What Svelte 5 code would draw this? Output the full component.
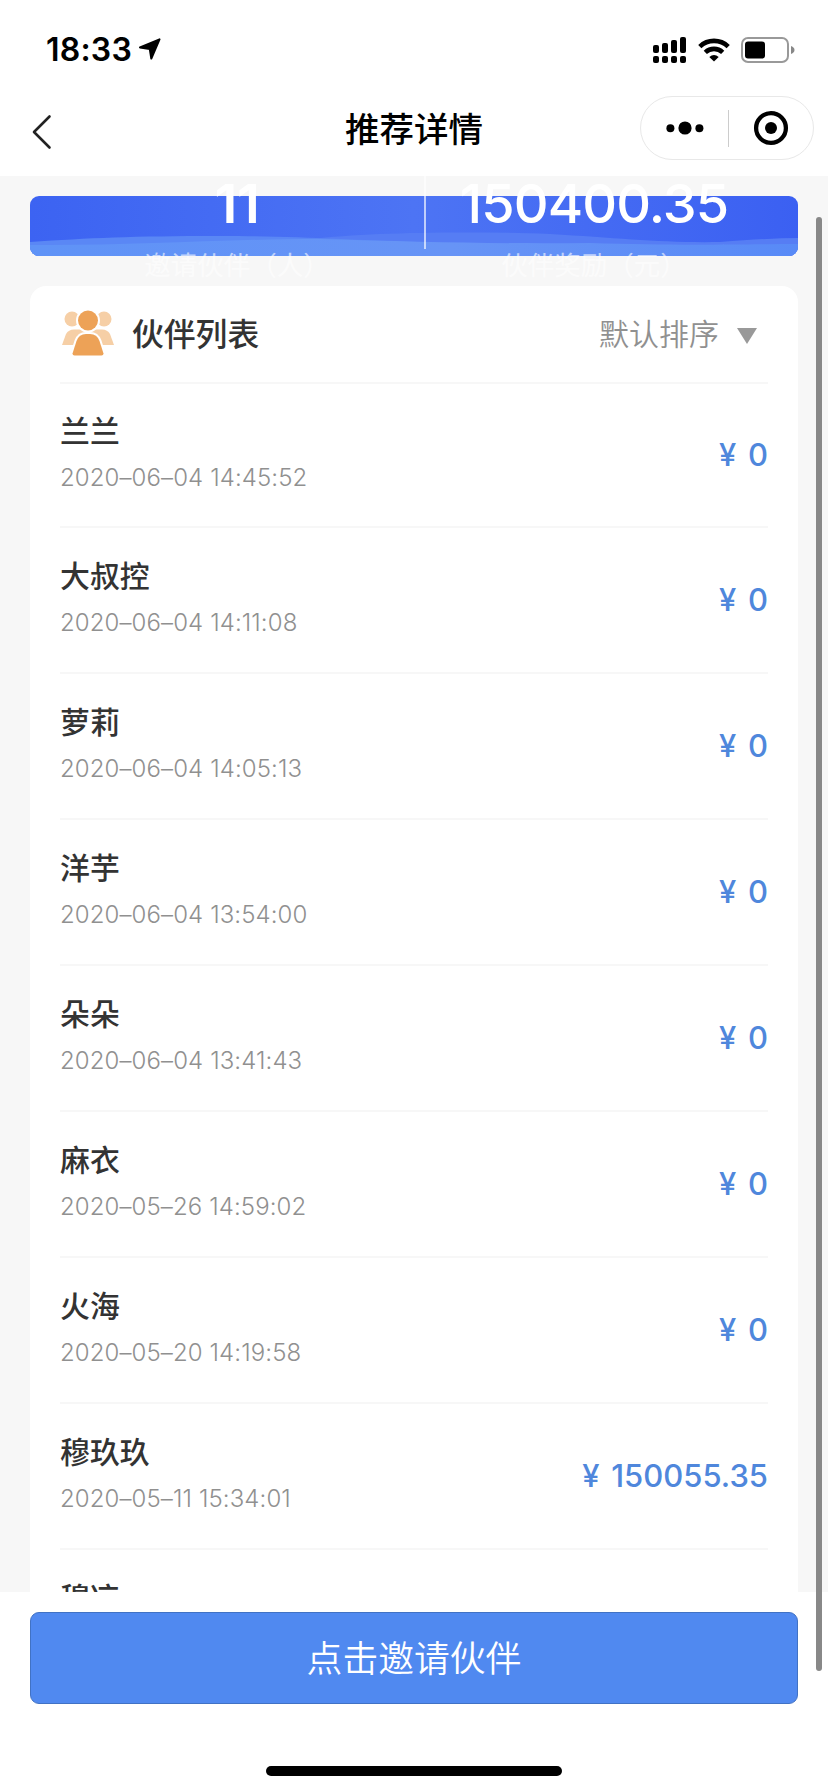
<script lang="ts">
  type Partner = { name: string; time: string; amount: string };

  const stats = { partners: "11", reward: "150400.35" };

  const partners: Partner[] = [
    { name: "兰兰", time: "2020–06–04 14:45:52", amount: "0" },
    { name: "大叔控", time: "2020–06–04 14:11:08", amount: "0" },
    { name: "萝莉", time: "2020–06–04 14:05:13", amount: "0" },
    { name: "洋芋", time: "2020–06–04 13:54:00", amount: "0" },
    { name: "朵朵", time: "2020–06–04 13:41:43", amount: "0" },
    { name: "麻衣", time: "2020–05–26 14:59:02", amount: "0" },
    { name: "火海", time: "2020–05–20 14:19:58", amount: "0" },
    { name: "穆玖玖", time: "2020–05–11 15:34:01", amount: "150055.35" },
    { name: "穆凉", time: "", amount: "" },
  ];

  // heights of the signal bars
  const bars = [8, 10, 13, 16];
</script>

<div class="screen">
  <header class="status-bar">
    <div class="clock">
      <span>18:33</span>
      <svg width="24" height="24" viewBox="0 0 24 24">
        <path d="M2 9.5 L21.5 1.3 L13.3 20.5 L11.8 11 Z" stroke="#000" stroke-width="2" stroke-linejoin="round" />
      </svg>
    </div>
    <div class="indicators">
      <svg width="34" height="28" viewBox="0 0 34 28">
        {#each bars as h, i}
          <rect x={i * 9} y={17 - h} width="6" height={h} rx="2" />
          <rect x={i * 9} y="20" width="6" height="7" rx="2" />
        {/each}
      </svg>
      <svg width="32" height="24" viewBox="0 0 32 24" fill="none" stroke="#000" stroke-width="4.6">
        <path d="M1.8 8.6 A20.5 20.5 0 0 1 30.2 8.6" />
        <path d="M7.3 14.4 A12.6 12.6 0 0 1 24.7 14.4" />
        <path d="M11.3 19 Q16 15.2 20.7 19 L16 23.6 Z" fill="#000" stroke="none" />
      </svg>
      <svg width="54" height="26" viewBox="0 0 54 26">
        <rect x="1" y="1" width="46" height="24" rx="6" fill="none" stroke="#999" stroke-width="2" />
        <rect x="4" y="4.5" width="20" height="17" rx="3" />
        <path d="M50 9 Q53.5 10.5 53.5 13 Q53.5 15.5 50 17 Z" fill="#888" />
      </svg>
    </div>
  </header>

  <nav class="nav-bar">
    <button class="back" aria-label="返回">
      <svg width="20" height="36" viewBox="0 0 20 36" fill="none" stroke="#222" stroke-width="2.6" stroke-linecap="round" stroke-linejoin="round">
        <path d="M17.5 2.5 L2 18 L17.5 33.5" />
      </svg>
    </button>
    <h1>推荐详情</h1>
    <div class="capsule">
      <svg width="38" height="14" viewBox="0 0 38 14">
        <circle cx="4.4" cy="7.3" r="4" />
        <circle cx="19" cy="7" r="6.6" />
        <circle cx="33.4" cy="7.3" r="4" />
      </svg>
      <span class="bar"></span>
      <svg width="36" height="36" viewBox="0 0 36 36">
        <circle cx="18" cy="18" r="14.9" fill="none" stroke="#000" stroke-width="4.3" />
        <circle cx="18" cy="18" r="6" />
      </svg>
    </div>
  </nav>

  <main>
    <section class="banner">
      <svg class="waves" viewBox="0 0 768 60" preserveAspectRatio="none">
        <defs>
          <linearGradient id="sky" x1="0" x2="1" y1="0" y2="0">
            <stop offset="0" stop-color="#3c63f2" />
            <stop offset="0.5" stop-color="#4d74f4" />
            <stop offset="1" stop-color="#3b60f2" />
          </linearGradient>
          <linearGradient id="wave" x1="0" x2="1" y1="0" y2="0">
            <stop offset="0" stop-color="#5f93f7" />
            <stop offset="0.55" stop-color="#6794f6" />
            <stop offset="1" stop-color="#588af7" />
          </linearGradient>
        </defs>
        <rect width="768" height="60" fill="url(#sky)" />
        <path d="M280 43 C340 36 440 35 520 38 C590 42 630 47 690 46 Q740 42 768 42 V60 H280 Z" fill="#567df4" />
        <path d="M0 46 C60 42 100 40 190 40 C270 40 320 44 390 46 V60 H0 Z" fill="#5a87f5" />
        <path d="M0 49 C100 50 190 43 290 43 C390 46 470 48 560 47 C650 50 720 48 768 48 V60 H0 Z" fill="url(#wave)" />
      </svg>
      <div class="stats">
        <div class="stat">
          <strong>{stats.partners}</strong>
          <span>邀请伙伴（人）</span>
        </div>
        <div class="stat reward">
          <strong>{stats.reward}</strong>
          <span>伙伴奖励（元）</span>
        </div>
      </div>
    </section>

    <section class="card">
      <div class="card-head">
        <svg width="52" height="48" viewBox="0 0 52 48">
          <g fill="#f6cfa6">
            <circle cx="10" cy="10" r="7.5" />
            <circle cx="42" cy="10" r="7.5" />
            <path d="M0 36 L4 25 Q6.5 20.5 12 20.5 H40 Q45.5 20.5 48 25 L52 36 Z" />
          </g>
          <g fill="#eda257" stroke="#fff" stroke-width="4" paint-order="stroke">
            <circle cx="26" cy="11.5" r="10" />
            <path d="M10.5 44.5 L14.5 32 Q17 25 24 25 H28 Q35 25 37.5 32 L41.5 44.5 Q41.5 46.5 39.5 46.5 H12.5 Q10.5 46.5 10.5 44.5 Z" />
          </g>
        </svg>
        <h2>伙伴列表</h2>
        <div class="sort">
          <span>默认排序</span>
          <i class="caret"></i>
        </div>
      </div>
      <ul>
        {#each partners as p}
          <li>
            <div class="info">
              <span class="name">{p.name}</span>
              <time>{p.time}</time>
            </div>
            {#if p.amount}
              <span class="amount">¥ {p.amount}</span>
            {/if}
          </li>
        {/each}
      </ul>
    </section>
  </main>

  <footer>
    <button class="invite">点击邀请伙伴</button>
    <div class="home"></div>
  </footer>

  <div class="scrollbar"></div>
</div>

<style>
  :global(body) {
    background: #fff;
  }

  .screen {
    position: relative;
    display: flex;
    flex-direction: column;
    width: 828px;
    height: 1792px;
    overflow: hidden;
    background: #fff;
    color: #000;
    font-family: Inter, "Noto Sans CJK SC", sans-serif;
  }

  .status-bar {
    display: flex;
    justify-content: space-between;
    align-items: center;
    height: 96px;
    padding: 3px 33px 0 46px;
    box-sizing: border-box;
  }

  .clock {
    display: flex;
    align-items: center;
    gap: 6px;
    font-size: 32px;
    font-weight: 600;
    letter-spacing: 0.2px;
  }

  .indicators {
    display: flex;
    align-items: center;
    gap: 11px;
  }

  .nav-bar {
    display: grid;
    grid-template-columns: 1fr auto 1fr;
    align-items: center;
    height: 80px;
    padding: 0 14px 16px 32px;
    box-sizing: border-box;
  }

  button {
    border: 0;
    padding: 0;
    background: none;
    font-family: inherit;
  }

  .back {
    display: flex;
    padding-top: 8px;
  }

  h1 {
    margin: 4px 0 0 -18px;
    font-size: 34.5px;
    font-weight: 500;
    line-height: 60px;
  }

  .capsule {
    justify-self: end;
    display: flex;
    align-items: center;
    justify-content: space-between;
    width: 174px;
    height: 64px;
    padding: 0 24px 0 25px;
    box-sizing: border-box;
    border: 1px solid #e8e8e8;
    border-radius: 32px;
  }

  .capsule .bar {
    width: 1px;
    height: 37px;
    margin-right: 0;
    background: #ccc;
  }

  main {
    height: 1416px;
    padding: 20px 30px 0;
    box-sizing: border-box;
    overflow: hidden;
    background: #f7f7f7;
  }

  .banner {
    position: relative;
    height: 60px;
    margin-bottom: 30px;
  }

  .waves {
    display: block;
    width: 100%;
    height: 100%;
    border-radius: 9px;
  }

  /* the figures spill over both edges of the banner */
  .stats {
    position: absolute;
    top: -27px;
    left: 20px;
    display: flex;
    color: #fff;
  }

  .stat {
    display: flex;
    flex-direction: column;
    align-items: center;
    width: 374px;
  }

  .stat.reward {
    width: 336px;
    height: 80px;
    border-left: 2px solid rgba(255, 255, 255, 0.65);
  }

  .stat strong {
    font-size: 54px;
    font-weight: 600;
    line-height: 70px;
    letter-spacing: -0.3px;
  }

  .stat.reward strong {
    font-weight: 500;
    letter-spacing: -0.9px;
  }

  .stat span {
    font-size: 26.5px;
    line-height: 40px;
    margin-top: 6px;
    white-space: nowrap;
    opacity: 0.6;
  }

  .card {
    padding: 0 30px;
    border-radius: 16px;
    background: #fff;
  }

  .card-head {
    display: flex;
    align-items: center;
    height: 98px;
    padding: 0 11px 2px 2px;
    box-sizing: border-box;
    border-bottom: 2px solid #f7f7f7;
  }

  h2 {
    flex: 1;
    margin: 0 0 3px 18px;
    font-size: 31.8px;
    font-weight: 500;
    color: #333;
  }

  .sort {
    display: flex;
    align-items: center;
    gap: 18px;
    font-size: 30px;
    font-weight: 350;
    color: #909090;
  }

  .sort span {
    margin-bottom: 3px;
  }

  .caret {
    margin-top: 6px;
    border: 10.5px solid transparent;
    border-top: 16px solid #999;
    border-bottom: 0;
  }

  ul {
    margin: 0;
    padding: 0;
    list-style: none;
  }

  li {
    display: flex;
    justify-content: space-between;
    align-items: center;
    height: 146px;
    box-sizing: border-box;
    border-bottom: 2px solid #f7f7f7;
  }

  li:first-child {
    height: 144px;
  }

  .info {
    display: flex;
    flex-direction: column;
    padding-bottom: 4px;
  }

  .name {
    font-size: 29.9px;
    font-weight: 500;
    line-height: 48px;
    color: #333;
  }

  time {
    height: 44px;
    font-size: 24px;
    font-weight: 300;
    line-height: 45px;
    letter-spacing: 0.1px;
    color: #909090;
  }

  .amount {
    margin-bottom: 2px;
    font-size: 31px;
    font-weight: 500;
    word-spacing: 3.5px;
    color: #4f87dc;
  }

  footer {
    display: flex;
    flex-direction: column;
    align-items: center;
    padding-top: 20px;
  }

  .invite {
    width: 768px;
    height: 92px;
    padding-bottom: 4px;
    box-sizing: border-box;
    border: 1px solid #4172c4;
    border-radius: 9px;
    background: #5089f0;
    color: #fff;
    font-size: 35.8px;
    font-weight: 350;
  }

  .home {
    width: 296px;
    height: 10px;
    margin-top: 62px;
    border-radius: 5px;
    background: #000;
  }

  .scrollbar {
    position: absolute;
    top: 217px;
    left: 816px;
    width: 6px;
    height: 1454px;
    border-radius: 3px;
    background: #888;
  }
</style>
